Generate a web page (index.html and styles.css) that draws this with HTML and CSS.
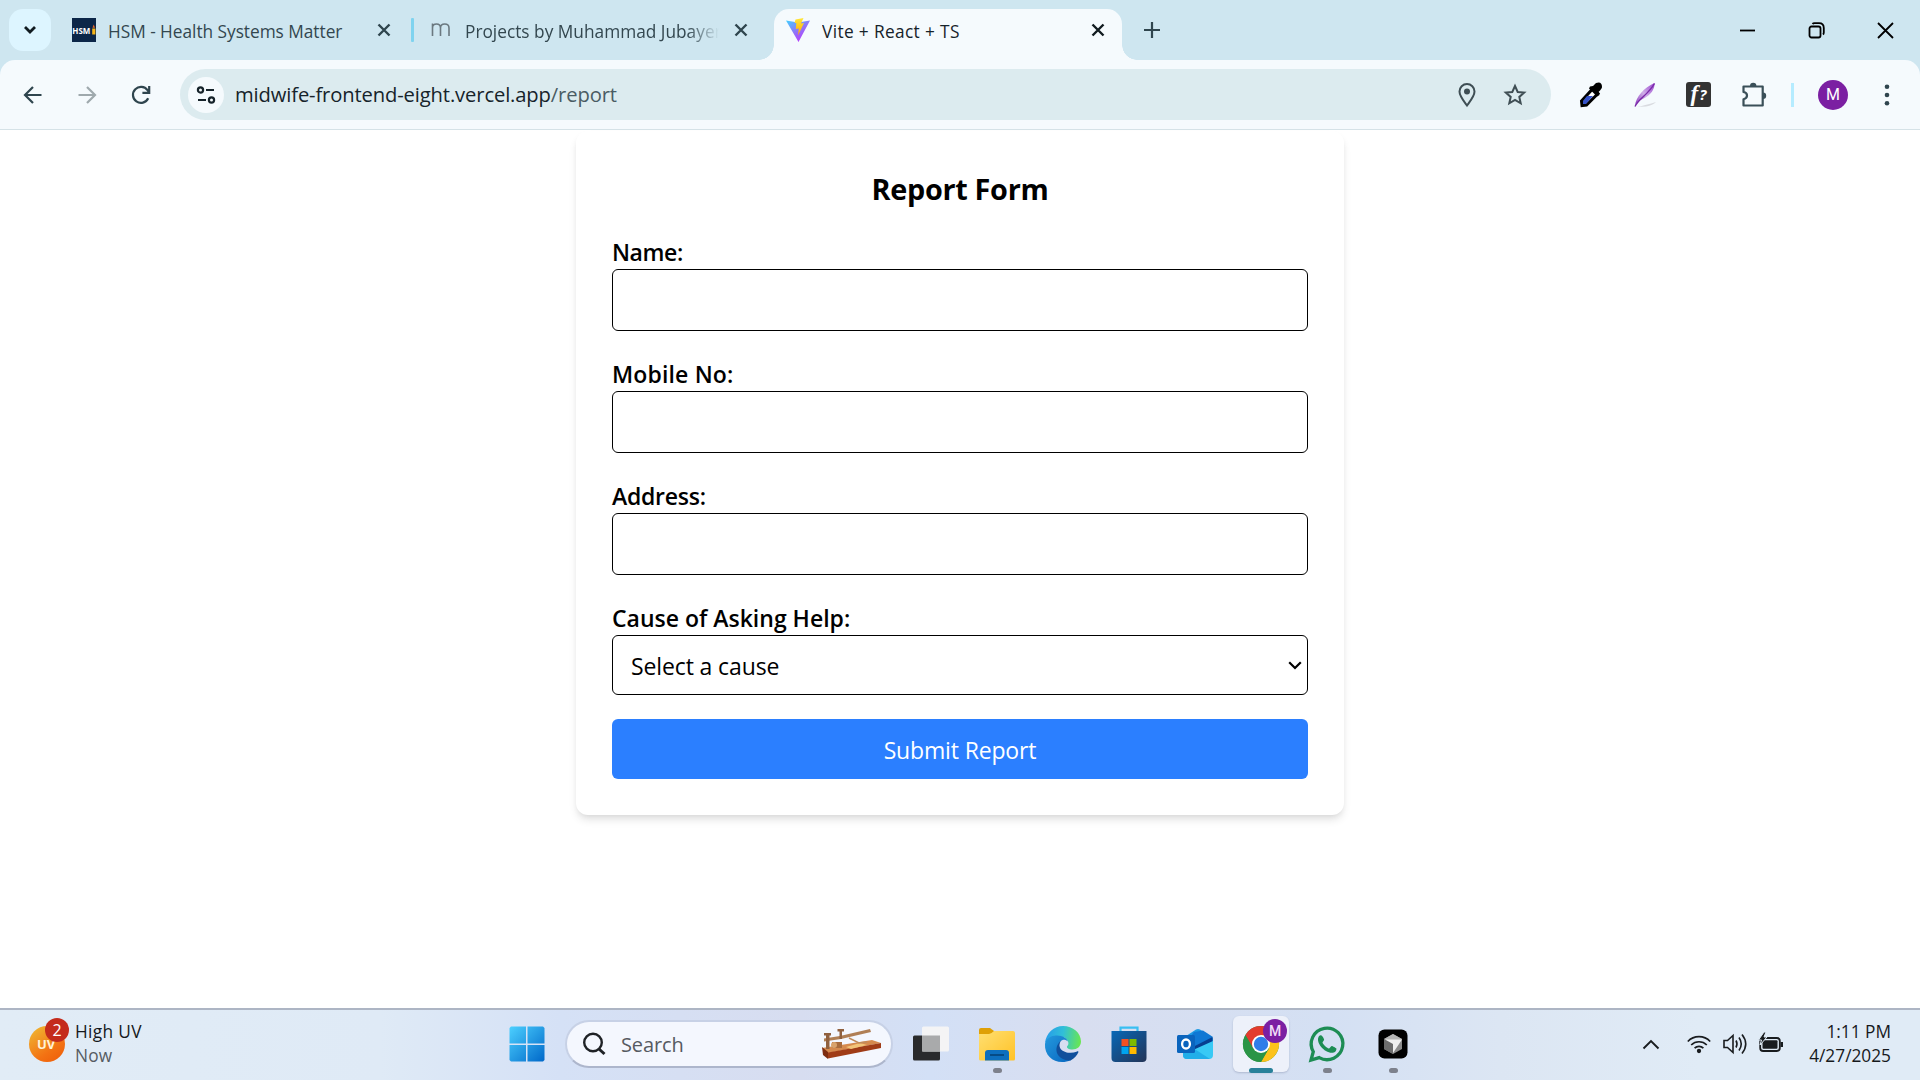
FILE: index.html
```html
<!DOCTYPE html>
<html lang="en">
<head>
<meta charset="utf-8">
<title>Vite + React + TS</title>
<link rel="stylesheet" href="styles.css">
</head>
<body>
<header class="tabstrip">
  <button class="tab-search" aria-label="Search tabs"><svg width="14" height="10" viewBox="0 0 14 10"><path d="M2 2l5 5 5-5" fill="none" stroke="#111b20" stroke-width="2.8"/></svg></button>
  <div class="tab tab-one">
    <svg class="fav" width="24" height="24" viewBox="0 0 24 24"><rect width="24" height="24" fill="#0b2648"/><text x=".3" y="15.800" class="hsm">HSM</text><path d="M20.200 10.500h3.200v6h-3.200z" fill="#f6b519"/><path d="M21.700 6.500l1.300 3.200h-2.500z" fill="#f06a2a"/></svg>
    <span class="tab-title t-hsm">HSM - Health Systems Matter</span>
    <svg class="x" width="14" height="14" viewBox="0 0 14 14"><path d="M1.500 1.500l11 11M12.500 1.500l-11 11"/></svg>
  </div>
  <i class="tab-sep"></i>
  <div class="tab tab-two">
    <svg class="fav" width="24" height="24" viewBox="0 0 24 24"><path d="M3.500 18V5.500M3.500 10c0-5.300 8-5.300 8 0v8M11.500 10c0-5.300 8.500-5.300 8.500 0v8" fill="none" stroke="#6b7980" stroke-width="1.600"/></svg>
    <span class="tab-title t-proj">Projects by Muhammad Jubayer</span>
    <svg class="x" width="14" height="14" viewBox="0 0 14 14"><path d="M1.500 1.500l11 11M12.500 1.500l-11 11"/></svg>
  </div>
  <div class="tab tab-active">
    <svg class="fav" width="24" height="24" viewBox="0 0 24 24"><defs><linearGradient id="v" x1="0" y1="0" x2=".7" y2="1"><stop stop-color="#41d1ff"/><stop offset=".5" stop-color="#8b7bf8"/><stop offset="1" stop-color="#bd34fe"/></linearGradient><linearGradient id="b" x1="0" y1="0" x2="0" y2="1"><stop stop-color="#ffe83a"/><stop offset="1" stop-color="#ffa800"/></linearGradient></defs><path d="M0 2.500l12 2 12-2L12.500 24z" fill="url(#v)"/><path d="M9.500 1.500L17.500 0l-2.500 5.500 3-.5-6 12.500.8-7-3 .5.500-6H8.500z" fill="url(#b)"/></svg>
    <span class="tab-title t-vite">Vite + React + TS</span>
    <svg class="x dark" width="14" height="14" viewBox="0 0 14 14"><path d="M1.500 1.500l11 11M12.500 1.500l-11 11"/></svg>
  </div>
  <svg class="plus" width="18" height="18" viewBox="0 0 18 18"><path d="M9 1v16M1 9h16" stroke="#2f454e" stroke-width="2.200"/></svg>
  <div class="win">
    <svg width="17" height="17" viewBox="0 0 17 17"><path d="M1 8.500h15"/></svg>
    <svg width="17" height="17" viewBox="0 0 17 17"><rect x="1.500" y="4.500" width="11" height="11" rx="2"/><path d="M4.500 2q.6-.8 2-.8h4.500q4.800 0 4.800 4.800v4.500q0 1.400-.9 2"/></svg>
    <svg width="17" height="17" viewBox="0 0 17 17"><path d="M1 1l15 15M16 1L1 16"/></svg>
  </div>
</header>
<div class="toolbar-back"><nav class="toolbar">
  <svg class="nav-i" width="24" height="24" viewBox="0 0 24 24"><path d="M20.500 12H4.500M12 4l-8 8 8 8"/></svg>
  <svg class="nav-i off" width="24" height="24" viewBox="0 0 24 24"><path d="M3.500 12h16M12 4l8 8-8 8"/></svg>
  <svg class="nav-i" width="24" height="24" viewBox="0 0 24 24"><path d="M19.200 15.300A8 8 0 1 1 18.500 7.200L20 9M20.200 3v6.800h-6.800"/></svg>
  <div class="omnibox">
    <span class="site"><svg width="20" height="20" viewBox="0 0 20 20" fill="none" stroke="#16232a" stroke-width="2.200"><circle cx="4.500" cy="5" r="2.600"/><path d="M10 5h8M2 15h8"/><circle cx="15.500" cy="15" r="2.600"/></svg></span>
    <span class="url"><span class="t-host">midwife-frontend-eight.vercel.app</span><span class="path">/report</span></span>
    <svg class="pin" width="24" height="26" viewBox="0 0 24 26"><path d="M12 23.500C8 18 4.500 14 4.500 9.500a7.500 7.500 0 0 1 15 0C19.500 14 16 18 12 23.500z" fill="none" stroke="#3f4e54" stroke-width="2"/><circle cx="12" cy="9.500" r="3" fill="#3f4e54"/></svg>
    <svg class="star" width="24" height="24" viewBox="0 0 24 24"><path d="M12 3l2.700 6 6.500.6-4.900 4.300 1.400 6.400L12 17l-5.700 3.300 1.400-6.400-4.900-4.300 6.500-.6z" fill="none" stroke="#3f4e54" stroke-width="2"/></svg>
  </div>
  <svg class="e1" width="24" height="26" viewBox="0 0 24 26"><path d="M3 23.500L2.500 19 14 6.500l5 5L7.500 23z" fill="#fff" stroke="#000" stroke-width="3"/><path d="M4 22v-3l4-5h6l-7 8z" fill="#3451c8"/><path d="M11 4.500l3-.5 3-3q6-2 6 4 0 1.500-3.500 5l1 3-2.500 1.500-8-8z"/></svg>
  <svg class="e2" width="24" height="26" viewBox="0 0 24 26"><defs><linearGradient id="f" x1="0" y1="1" x2="1" y2="0"><stop stop-color="#8a35bd"/><stop offset=".5" stop-color="#cfaee8"/><stop offset="1" stop-color="#9a45cf"/></linearGradient></defs><path d="M3 25q7-1.500 19-5-3 3-10 4.500z" fill="#d9dbe0"/><path d="M1 24C2 14 10 6 20.500 1c.5 6-4 12-10 15-4 2-6.500 3-9.500 8z" fill="url(#f)"/><path d="M1 24.500C5 16 14 13 20.500 1.500" fill="none" stroke="#7a2aa8" stroke-width="1.400"/></svg>
  <svg class="e3" width="25" height="25" viewBox="0 0 25 25"><rect width="25" height="25" rx="3" fill="#333"/><text x="4.500" y="18.500" class="fq">f</text><text x="13.500" y="18" class="q">?</text></svg>
  <svg class="e4" width="26" height="26" viewBox="0 0 26 26"><path d="M2.500 4.500h19.200v19H2.500v-6.300q3.500-.8 3.500-3.700T2.500 10z" fill="none" stroke="#3a4f58" stroke-width="2.200" stroke-linejoin="round"/><path d="M9 4a3.200 3.200 0 0 1 6.400 0zM22 10.500a3.200 3.200 0 0 1 0 6.400z" fill="#3a4f58"/></svg>
  <i class="bar"></i>
  <span class="avatar">M</span>
  <svg class="dots" width="6" height="24" viewBox="0 0 6 24" fill="#2f454e"><circle cx="3" cy="3.700" r="2.300"/><circle cx="3" cy="12" r="2.300"/><circle cx="3" cy="20.300" r="2.300"/></svg>
</nav></div>
<main class="page">
  <form class="card">
    <h2>Report Form</h2>
    <label class="field"><span class="t-name">Name:</span><input type="text"></label>
    <label class="field"><span class="t-mob">Mobile No:</span><input type="text"></label>
    <label class="field"><span class="t-addr">Address:</span><input type="text"></label>
    <div class="field"><span>Cause of Asking Help:</span>
      <div class="select"><b>Select a cause</b><svg width="14" height="9" viewBox="0 0 14 9"><path d="M1.200 1.200L7 7l5.800-5.800" fill="none" stroke="#000" stroke-width="2.200"/></svg></div></div>
    <button type="button" class="submit">Submit Report</button>
  </form>
</main>
<footer class="taskbar">
  <div class="weather">
    <span class="uv"><em>UV</em><b>2</b></span>
    <div class="lines"><span class="high">High UV</span><span class="now">Now</span></div>
  </div>
  <div class="center">
    <div class="app"><svg width="36" height="36" viewBox="0 0 36 36"><defs><linearGradient id="w" x1="0" y1="0" x2="1" y2="1"><stop stop-color="#4cd0ff"/><stop offset="1" stop-color="#0068c9"/></linearGradient></defs><path d="M2 .5h15v17H.5V2zM18.500.5H34L35.500 2v15.500h-17zM.5 19h16.500v16.500H2L.5 34zM18.500 19h17v15L34 35.500H18.500z" fill="url(#w)"/></svg></div>
    <div class="search">
      <svg width="24" height="24" viewBox="0 0 24 24"><circle cx="11" cy="10.500" r="8.800" fill="none" stroke="#1f2226" stroke-width="2.400"/><path d="M17 17l5.500 5" stroke="#1f2226" stroke-width="3"/></svg>
      <span>Search</span>
      <svg class="morse" width="60" height="32" viewBox="0 0 60 32"><path d="M0 20L50 12l9 3-53 10z" fill="#d58a4e"/><path d="M0 19l6 5v7l-5-4z" fill="#7d2c10"/><path d="M6 24.500l53-9.500v5L6 30.500z" fill="#a03c17"/><path d="M24 19l14-4 7 2-16 4z" fill="#f2c479"/><path d="M2 10.500L18 8l30-7 1 3-30 7-17 2.500z" fill="#b07f55"/><path d="M2 5h7v2.500H7.500V21H4V7.500H2zM15.500 1h6.500v2.500h-2V11h-2.500V3.500h-2z" fill="#90603e"/><path d="M10 14h10v6H10z" fill="#a96c3d"/><circle cx="12" cy="17" r="3" fill="#d9a36c"/><path d="M27 10l10 5 8-1" fill="none" stroke="#c08c5c" stroke-width="1.400"/></svg>
    </div>
    <div class="app"><svg width="38" height="36" viewBox="0 0 38 36"><rect x="1" y="9.500" width="27" height="25" rx="1.500" fill="#292a2c"/><rect x="10" y="0.500" width="27" height="25" rx="1.500" fill="#f4f4f5"/><path d="M10 9.500h18v16H10z" fill="#a9aaab"/></svg></div>
    <div class="app run"><svg width="36" height="36" viewBox="0 0 36 36"><defs><linearGradient id="y" x1="0" y1="0" x2="1" y2="1"><stop stop-color="#ffdf72"/><stop offset="1" stop-color="#ffc226"/></linearGradient></defs><path d="M0 4q0-2 2-2h9l4 3v5H0z" fill="#dfa006"/><path d="M0 8h10q2 0 5-3h19q2 0 2 2v26q0 1.500-1.500 1.500h-33Q0 34.500 0 33z" fill="url(#y)"/><path d="M6 34.500V27q0-3 3-3h18q3 0 3 3v7.500z" fill="#0d6fbe"/><path d="M11 29h14" stroke="#064b85" stroke-width="2"/></svg></div>
    <div class="app"><svg width="36" height="36" viewBox="0 0 36 36"><defs><linearGradient id="e1" x1="0" y1=".3" x2="1" y2=".4"><stop stop-color="#259bea"/><stop offset=".5" stop-color="#31bfd8"/><stop offset="1" stop-color="#68e653"/></linearGradient><linearGradient id="e2" x1="0" y1="0" x2="1" y2="1"><stop stop-color="#2499dd"/><stop offset="1" stop-color="#0867c0"/></linearGradient></defs><path d="M0 17C1 7 9 0 18 0c10 0 18 7 18 15.500 0 5-4 8-8.500 8-4 0-6-1.500-5.500-3 1-1 2-3 1-5-3-7-17-7.500-23 1.500z" fill="url(#e1)"/><path d="M0 18C1 12 7 9 12 9.500c6 0 10 3 11 6-4-3.500-9-1-9 4 0 7 6 13 12 14.500C13 40-1 32 0 18z" fill="url(#e2)"/><path d="M16 14.500c-9 8-4 20 9.500 20 4-2 6.500-5 8-8.500 0-1-1-.8-2-.3C24 29 10 25 16 14.500z" fill="#104f9c"/></svg></div>
    <div class="app"><svg width="36" height="36" viewBox="0 0 36 36"><defs><linearGradient id="s" x1="0" y1="0" x2="1" y2="1"><stop stop-color="#0868b7"/><stop offset="1" stop-color="#233457"/></linearGradient></defs><path d="M9.500 6V1.700h17V6" fill="none" stroke="#39bff2" stroke-width="2.200"/><path d="M.5 5h35v27q0 4-4 4h-27q-4 0-4-4z" fill="url(#s)"/><path fill="#f25022" d="M10.500 13h7v7h-7z"/><path fill="#7fba00" d="M18.500 13h7v7h-7z"/><path fill="#00a4ef" d="M10.500 21h7v7h-7z"/><path fill="#ffb900" d="M18.500 21h7v7h-7z"/></svg></div>
    <div class="app"><svg width="36" height="36" viewBox="0 0 36 36"><path d="M6 12L19 3.500q2-1 4 0L36 12v6L16 24 6 20z" fill="#1c9ae4"/><path d="M17 6l9-1.500 10 6.500-20 12-8-5z" fill="#0f78d4"/><path d="M35.500 11v5L18 27l-6-4z" fill="#073f91"/><path d="M6 21l10 3L36 15v14q0 4-4 4H10q-4 0-4-4z" fill="#38c9f5"/><path d="M6 27l10-5 17 11H10q-4 0-4-4z" fill="#21aee9"/><rect y="9" width="18" height="18" rx="1.500" fill="#0a64bd"/><ellipse cx="9" cy="18" rx="3.900" ry="4.500" fill="none" stroke="#fff" stroke-width="2.300"/></svg></div>
    <div class="app run current"><svg width="36" height="36" viewBox="0 0 36 36"><circle cx="18" cy="18" r="18" fill="#2a9446"/><path d="M2.400 9A18 18 0 0 1 33.600 9H18L10.200 22.500z" fill="#e33b2e"/><path d="M33.600 9A18 18 0 0 1 18 36l7.800-13.500L18 9z" fill="#fcc21b"/><path d="M2.400 9L10.200 22.500 18 27l7.800-4.500L18 36A18 18 0 0 1 2.400 9z" fill="#2a9446"/><circle cx="18" cy="18" r="9" fill="#fff"/><circle cx="18" cy="18" r="7.200" fill="#2f7de9"/></svg><b class="mbadge">M</b></div>
    <div class="app run"><svg width="36" height="36" viewBox="0 0 36 36"><path d="M2 34l2.300-8.300a15.800 15.800 0 1 1 5.900 5.900z" fill="none" stroke="#1d8d54" stroke-width="3.300"/><path d="M12.500 9.500c-.8-.6-1.800-.2-2.600.8-4 6 6 17.500 14 16.500 2.500-.5 3.800-2.500 3.500-4.300-.2-.5-4-2.500-4.700-2.500-1 0-1.900 2.500-2.700 2.400-2.500-.7-5.700-3.700-6.500-6 .3-1.200 1.700-1.700 1.600-3-.3-1-1.500-3.500-2.600-3.900z" fill="#1d8d54"/></svg></div>
    <div class="app run"><svg width="30" height="30" viewBox="0 0 30 30"><rect x=".5" y=".5" width="29" height="29" rx="6" fill="#000"/><path d="M15 5l9 5v10l-9 5-9-5V10z" fill="#8c8c8c"/><path d="M15 5l9 5-9 4-9-4z" fill="#b5b5b5"/><path d="M6 10l9 4v11l-9-5z" fill="#6d6d6d"/><path d="M7 10.500h17L15 24v-9z" fill="#f0f0f0"/></svg></div>
  </div>
  <div class="tray">
    <svg class="up" width="18" height="12" viewBox="0 0 18 12"><path d="M1.500 10.500L9 3l7.500 7.500" fill="none" stroke="#191c1f" stroke-width="1.900"/></svg>
    <svg width="24" height="20" viewBox="0 0 24 20" fill="none" stroke="#191c1f" stroke-width="1.700"><path d="M.8 7.500a15.500 15.500 0 0 1 22.400 0M4.200 11a11 11 0 0 1 15.600 0M7.600 14.200a6.200 6.200 0 0 1 8.800 0"/><circle cx="12" cy="17" r="1.300" fill="#191c1f"/></svg>
    <svg width="24" height="22" viewBox="0 0 24 22" fill="none" stroke="#191c1f" stroke-width="1.600"><path d="M1 7.500h3.500L10 2.500v17L4.500 14.500H1z"/><path d="M13 7.500q2 3.500 0 7M16 4.500q4.500 6.500 0 13M19 1.500q7.500 9.500 0 19"/></svg>
    <svg width="24" height="20" viewBox="0 0 24 20"><rect x="1.200" y="4" width="19.600" height="13" rx="3" fill="none" stroke="#191c1f" stroke-width="1.800"/><rect x="3.500" y="6.300" width="15" height="8.500" rx="1" fill="#191c1f"/><path d="M21.500 8h2.500v5h-2.500z" fill="#191c1f"/><path d="M5-2L-.5 6h3L1 11l7-8H5L7-2z" fill="#191c1f" stroke="#dfebf6"/></svg>
    <div class="clock"><span>1:11 PM</span><span>4/27/2025</span></div>
  </div>
</footer>
</body>
</html>
```
FILE: styles.css
```css
* { box-sizing: border-box; }
body { margin: 0; width: 1920px; height: 1080px; overflow: hidden; display: flex; flex-direction: column; background: #fff; font-family: "Open Sans", "Noto Sans", sans-serif; color: #000; }
svg { display: block; flex: none; overflow: visible; }
button, input { font: inherit; }

/* Tab strip */
.tabstrip { height: 60px; flex: none; background: #cee6f0; display: flex; align-items: center; padding-left: 9px; font-size: 17.300px; }
.tab-search { width: 42px; height: 42px; border: 0; border-radius: 14px; background: #ddf5ff; display: grid; place-items: center; padding: 0; }
.tab { display: flex; align-items: center; height: 51px; margin-top: 9px; padding-bottom: 9px; color: #33474f; }
.tab-one { margin-left: 21px; width: 339px; }
.tab-two { width: 334px; padding-left: 15px; margin-right: 26px; }
.tab-title { margin-left: 12px; padding-top: 2px; white-space: nowrap; overflow: hidden; flex: 1; }
.t-hsm { letter-spacing: -.03px; }
.t-vite { letter-spacing: .36px; }
.x { margin-left: 10px; stroke: #2f454e; stroke-width: 2.4; }
.x.dark { stroke: #111b20; }
.tab-one .x { margin-right: 20px; }
.tab-sep { width: 3px; height: 24px; border-radius: 1px; background: #7fd3ef; }
.tab-active { width: 348px; padding: 0 17px 9px 12px; background: #f5fafd; border-radius: 15px 15px 0 0; color: #16232a; position: relative; }
.tab-active::before, .tab-active::after { content: ""; position: absolute; bottom: 0; width: 15px; height: 15px; }
.tab-active::before { left: -15px; background: radial-gradient(circle at 0 0, transparent 14.5px, #f5fafd 15px); }
.tab-active::after { right: -15px; background: radial-gradient(circle at 100% 0, transparent 14.5px, #f5fafd 15px); }
.t-proj { -webkit-mask-image: linear-gradient(90deg, #000 222px, transparent 254px); mask-image: linear-gradient(90deg, #000 222px, transparent 254px); }
.hsm { font: 700 8px "Open Sans", sans-serif; fill: #fff; }
.plus { margin-left: 21px; }
.win { margin-left: auto; margin-right: 26px; display: flex; gap: 52px; fill: none; stroke: #000; stroke-width: 1.8; }

/* Toolbar */
.toolbar-back { background: #cee6f0; flex: none; }
.toolbar { height: 70px; background: #f5fafd; border-radius: 15px 15px 0 0; border-bottom: 1px solid #d5e2e7; display: flex; align-items: center; padding-left: 21px; }
.nav-i { margin-right: 30px; fill: none; stroke: #2f454e; stroke-width: 2.2; }
.nav-i.off { stroke: #9fa9ad; }
.omnibox { width: 1371px; height: 51px; border-radius: 26px; background: #dcebef; margin-left: -3px; display: flex; align-items: center; padding: 0 24px 0 8px; }
.site { width: 36px; height: 36px; border-radius: 50%; background: #f5fafd; display: grid; place-items: center; }
.url { margin-left: 11px; padding-bottom: 2px; font-size: 20.200px; letter-spacing: -.13px; color: #16232a; flex: 1; white-space: nowrap; }
.path { color: #4a5c64; }
.pin { margin-right: 24px; }
.e1 { margin-left: 28px; }
.e2 { margin-left: 31px; }
.e3 { margin-left: 28px; }
.e4 { margin-left: 30px; }
.bar { width: 3px; height: 24px; background: #b5ecff; margin-left: 24px; }
.avatar { width: 30px; height: 30px; border-radius: 50%; background: #7b1fa2; color: #fff; margin-left: 24px; display: grid; place-items: center; font: 400 16px Roboto, sans-serif; }
.dots { margin-left: 36px; }
.fq { font: italic 700 23px "Liberation Serif", serif; fill: #fff; }
.q { font: italic 700 15px "Open Sans", sans-serif; fill: #fff; }

/* Page */
.page { flex: 1; min-height: 0; display: flex; flex-direction: column; align-items: center; overflow: hidden; padding-top: 1px; }
.card { width: 768px; height: 684px; padding: 36px; border-radius: 12px; background: #fff; box-shadow: 0 6px 9px -1.5px rgba(0,0,0,.1), 0 3px 6px -3px rgba(0,0,0,.1); font-size: 23px; }
.card h2 { margin: 0 0 24px; height: 42px; line-height: 44px; text-align: center; font-size: 28.800px; font-weight: 700; letter-spacing: -.3px; }
.field { display: block; margin-bottom: 24px; font-weight: 600; }
.field > span { display: block; width: max-content; height: 36px; line-height: 38px; white-space: nowrap; }
.t-name { letter-spacing: -.4px; }
.t-mob { letter-spacing: .15px; }
.t-addr { letter-spacing: -.25px; }
.field input { display: block; width: 100%; height: 62px; border: 1px solid #000; border-radius: 6px; background: #fff; }
.select { height: 60px; border: 1px solid #000; border-radius: 6px; display: flex; align-items: center; justify-content: space-between; padding: 0 5px 0 18px; }
.select b { font-weight: 400; line-height: 36px; padding-top: 2px; letter-spacing: -.12px; }
.submit { display: block; width: 100%; height: 60px; border: 0; border-radius: 6px; background: #2b7fff; color: #fff; padding: 2px 0 0; letter-spacing: -.15px; }

/* Taskbar */
.taskbar { height: 72px; flex: none; border-top: 2px solid #adb5c4; background: linear-gradient(90deg, #e1ecf6 0, #dfeaf6 380px, #d5e1f6 560px, #d7ddf0 800px, #d3e0f6 930px, #d8def0 1080px, #d4e0f3 1330px, #dce6f3 1500px, #e0ebf6 1700px); display: grid; grid-template-columns: 494px 1fr 290px; align-items: start; font-size: 17.300px; }
.weather { display: flex; align-items: center; padding-left: 29px; height: 68px; }
.uv { width: 36px; height: 36px; border-radius: 50%; background: linear-gradient(145deg, #efbd35, #f37213 65%, #ee5a08); position: relative; }
.uv em { position: absolute; left: 8px; top: 9px; font: 700 13px/18px "Open Sans", sans-serif; color: #fff3d6; }
.uv b { position: absolute; left: 16px; top: -8px; width: 24px; height: 24px; border-radius: 50%; background: #c42b1c; color: #fff; font: 400 16px/24px "Open Sans", sans-serif; text-align: center; }
.lines, .clock { display: flex; flex-direction: column; line-height: 24px; white-space: nowrap; }
.lines { margin-left: 10px; color: #16191c; }
.high { letter-spacing: .35px; }
.lines .now { color: #565c62; letter-spacing: .2px; }
.center { display: flex; align-items: center; }
.app { width: 66px; height: 68px; display: grid; place-items: center; position: relative; }
.app.run::after { content: ""; position: absolute; left: 29px; bottom: 5px; width: 9px; height: 5px; border-radius: 3px; background: #7d818c; }
.app.current::before { content: ""; position: absolute; left: 5px; top: 6px; width: 56px; height: 56px; border-radius: 6px; background: #edf1fa; box-shadow: 0 1px 2px rgba(60,70,110,.25); }
.app.current::after { left: 21px; width: 24px; background: #28819a; }
.app.current svg { position: relative; }
.mbadge { position: absolute; left: 35px; top: 9px; width: 24px; height: 24px; border-radius: 50%; background: #7b1fa2; color: #f0dcf7; font: 500 14px/24px Roboto, sans-serif; text-align: center; }
.search { width: 328px; height: 48px; margin: 0 5px; border-radius: 24px; border: 2px solid #c7d1e6; border-bottom-color: #adb6cc; background: #f4f7fe; display: flex; align-items: center; padding: 0 9px 0 15px; font-size: 20px; color: #565a61; }
.search span { margin-left: 15px; letter-spacing: -.1px; }
.morse { margin-left: auto; }
.tray { display: flex; align-items: center; justify-content: flex-end; padding-right: 29px; gap: 12px; color: #16191c; height: 68px; }
.up { margin-right: 15px; }
.clock { width: 96px; align-items: flex-end; }
```
